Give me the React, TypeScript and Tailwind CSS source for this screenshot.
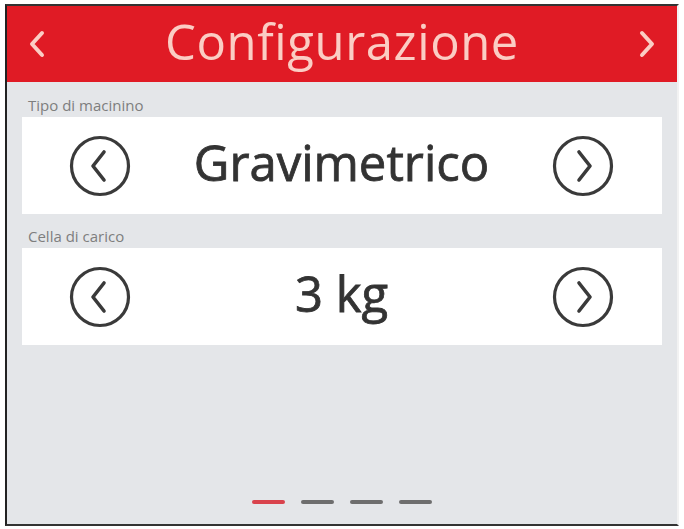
import React from "react";

const rows = [
  { label: "Tipo di macinino", value: "Gravimetrico" },
  { label: "Cella di carico", value: "3 kg" },
];

function CircleArrow({ dir }: { dir: "left" | "right" }) {
  return (
    <svg width="64" height="64" viewBox="0 0 64 64" className="shrink-0">
      <circle cx="32" cy="32" r="28.5" fill="none" stroke="#3a3a3a" strokeWidth="3.2" />
      {dir === "left" ? (
        <path d="M36 18 L25 32 L36 46" fill="none" stroke="#3a3a3a" strokeWidth="3.6" strokeLinecap="round" strokeLinejoin="round" />
      ) : (
        <path d="M28 18 L39 32 L28 46" fill="none" stroke="#3a3a3a" strokeWidth="3.6" strokeLinecap="round" strokeLinejoin="round" />
      )}
    </svg>
  );
}

export default function App() {
  return (
    <div className="h-[529px] w-[684px] overflow-hidden bg-white pt-[4px] pl-[5px] font-['Open_Sans',sans-serif]">
      <div className="flex h-[522px] w-[674px] flex-col border-t-2 border-b-2 border-l-2 border-t-[#333] border-b-[#333] border-l-[#222] border-r-2 border-r-[#f2f2f2] bg-[#e4e6e9]">
        <header className="flex h-[76px] items-center justify-between bg-[#e01b25] px-[20px] text-[#fbcdc4]">
          <svg width="20" height="30" viewBox="0 0 20 30">
            <path d="M15 4 L5 15 L15 26" fill="none" stroke="#fbcdc4" strokeWidth="4" strokeLinecap="round" strokeLinejoin="round" />
          </svg>
          <h1 className="pb-[6px] text-[49px] leading-none tracking-[0.6px]">Configurazione</h1>
          <svg width="20" height="30" viewBox="0 0 20 30">
            <path d="M5 4 L15 15 L5 26" fill="none" stroke="#fbcdc4" strokeWidth="4" strokeLinecap="round" strokeLinejoin="round" />
          </svg>
        </header>

        <div className="flex flex-col px-[15px] pt-[13px]">
          {rows.map((row) => (
            <section key={row.label} className="mb-[12px]">
              <p className="pl-[6px] text-[15px] leading-[20px] text-[#7e7e7e]">{row.label}</p>
              <div className="mt-[2px] flex h-[97px] items-center justify-between bg-white pl-[46px] pr-[47px]">
                <CircleArrow dir="left" />
                <span className="pb-[6px] text-[49px] leading-none text-[#333] [-webkit-text-stroke:0.8px_#333]">{row.value}</span>
                <CircleArrow dir="right" />
              </div>
            </section>
          ))}
        </div>

        <div className="mt-auto mb-[20px] flex justify-center gap-[16px]">
          <span className="h-[4px] w-[33px] rounded-full bg-[#d9434d]" />
          <span className="h-[4px] w-[33px] rounded-full bg-[#6e6e6e]" />
          <span className="h-[4px] w-[33px] rounded-full bg-[#6e6e6e]" />
          <span className="h-[4px] w-[33px] rounded-full bg-[#6e6e6e]" />
        </div>
      </div>
    </div>
  );
}
